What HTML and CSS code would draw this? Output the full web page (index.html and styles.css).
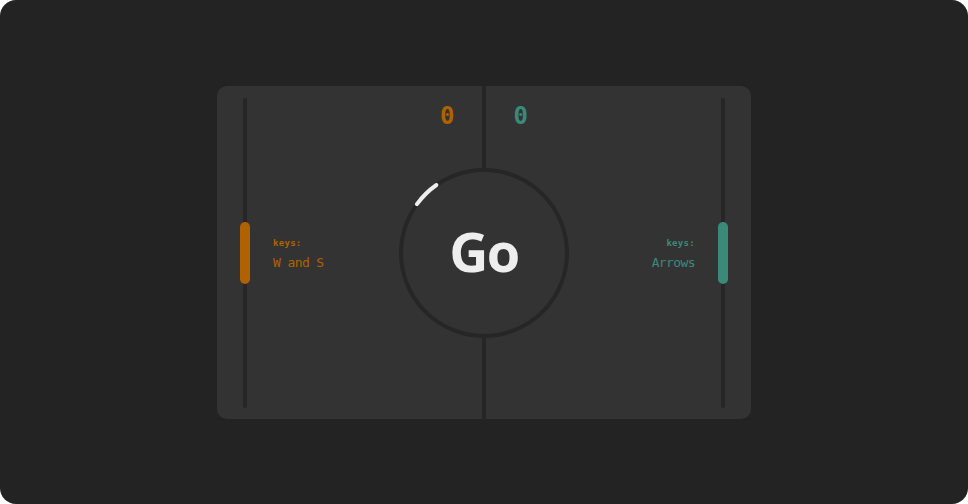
FILE: index.html
```html
<!DOCTYPE html>
<html>
<head>
<meta charset="utf-8">
<link rel="stylesheet" href="styles.css">
</head>
<body>
<div class="app">
  <div class="board">
    <div class="midline"></div>
    <div class="scores">
      <span class="score orange">0</span>
      <span class="score teal">0</span>
    </div>
    <div class="lane">
      <div class="track"></div>
      <div class="paddle orange-bg"></div>
    </div>
    <div class="field">
      <div class="info left orange">
        <div class="keys-label">keys:</div>
        <div class="keys-value">W and S</div>
      </div>
      <div class="go">
        <svg class="ring" width="170" height="170" viewBox="0 0 170 170">
          <circle cx="85" cy="85" r="83" fill="#333333" stroke="#262626" stroke-width="4"/>
          <path d="M 17.9 36.2 A 83 83 0 0 1 37.4 17" fill="none" stroke="#eeeeee" stroke-width="4" stroke-linecap="round"/>
        </svg>
        <span class="go-text">Go</span>
      </div>
      <div class="info right teal">
        <div class="keys-label">keys:</div>
        <div class="keys-value">Arrows</div>
      </div>
    </div>
    <div class="lane">
      <div class="track"></div>
      <div class="paddle teal-bg"></div>
    </div>
  </div>
</div>
</body>
</html>
```

FILE: styles.css
```css
html, body {
  margin: 0;
  padding: 0;
  background: #ffffff;
}
.app {
  width: 968px;
  height: 504px;
  background: #232323;
  border-radius: 16px;
  display: flex;
  align-items: center;
  justify-content: center;
}
.board {
  position: relative;
  width: 534px;
  height: 333px;
  box-sizing: border-box;
  background: #333333;
  border-radius: 10px;
  display: flex;
  gap: 23px;
  padding: 12px 23px 11px;
}
.midline {
  position: absolute;
  top: 0;
  bottom: 0;
  left: 265px;
  width: 4px;
  background: #262626;
}
.scores {
  position: absolute;
  top: 16px;
  left: 0;
  right: 0;
  display: flex;
  justify-content: center;
  gap: 59px;
}
.score {
  font-family: "DejaVu Sans Mono", monospace;
  font-weight: bold;
  font-size: 24px;
  line-height: 28px;
}
.orange { color: #b06200; }
.teal { color: #3b8a79; }
.orange-bg { background: #b06200; }
.teal-bg { background: #3b8a79; }
.lane {
  position: relative;
  width: 10px;
  display: flex;
  justify-content: center;
}
.track {
  width: 4px;
  background: #262626;
  border-radius: 2px;
}
.paddle {
  position: absolute;
  left: 0;
  top: 124px;
  width: 10px;
  height: 62px;
  border-radius: 5px;
}
.field {
  flex: 1;
  display: grid;
  grid-template-columns: 1fr auto 1fr;
  align-items: center;
}
.info {
  font-family: "DejaVu Sans Mono", monospace;
  display: flex;
  flex-direction: column;
  gap: 6px;
  margin-top: 2px;
}
.info.right {
  align-items: flex-end;
}
.keys-label {
  font-size: 9px;
  font-weight: bold;
  line-height: 12px;
  letter-spacing: 0.3px;
}
.keys-value {
  font-size: 13px;
  line-height: 16px;
  letter-spacing: -0.6px;
}
.go {
  position: relative;
  width: 170px;
  height: 170px;
  display: flex;
  align-items: center;
  justify-content: center;
}
.ring {
  position: absolute;
  left: 0;
  top: 0;
}
.go-text {
  position: relative;
  font-family: "Open Sans", sans-serif;
  font-weight: bold;
  font-size: 54px;
  line-height: 60px;
  color: #eeeeee;
  letter-spacing: -1.5px;
  margin-top: -4px;
}
```
